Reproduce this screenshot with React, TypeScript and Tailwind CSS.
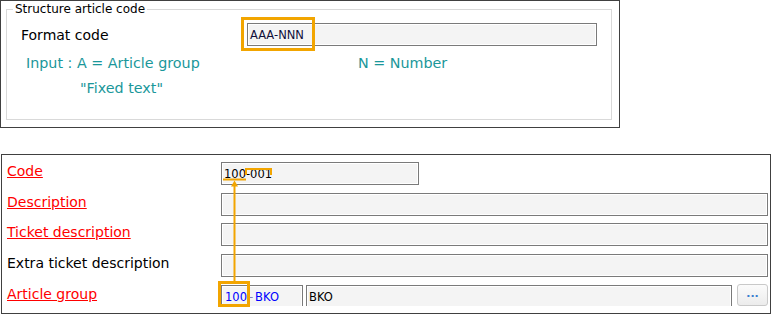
export default function App() {
  const inputCls =
    "h-[23px] border border-[#7a7a7a] bg-[#f4f4f4] shadow-[inset_0_0_0_1px_#ffffff] flex items-center text-[11.5px] leading-[14px]";
  const labelCls = "w-[214px] shrink-0 text-[14px] leading-[18px]";
  return (
    <div className="relative w-[771px] h-[314px] bg-white overflow-hidden font-['DejaVu_Sans',Verdana,sans-serif] text-black">
      {/* Top panel */}
      <div className="w-[620px] h-[128px] border border-[#404040] px-[5px] pt-[1px]">
        <fieldset className="w-[606px] h-[118px] border border-[#d9d9d9] m-0 p-0">
          <legend className="ml-[6px] px-[2px] text-[12px] leading-[14px] text-black">
            Structure article code
          </legend>
          <div className="mt-[7px] flex items-center">
            <div className="w-[240px] shrink-0 pl-[14px] pt-[2px] text-[14px] leading-[17px]">Format code</div>
            <div className={inputCls + " w-[350px] pl-[2px] text-[#10103a]"}>AAA-NNN</div>
          </div>
          <div className="mt-[9px] flex text-[14.3px] leading-[17px] text-[#1a979a]">
            <span className="w-[351px] shrink-0 pl-[19px]">Input : A = Article group</span>
            <span>N = Number</span>
          </div>
          <div className="mt-[8px] pl-[73px] text-[14.3px] leading-[17px] text-[#1a979a]">"Fixed text"</div>
        </fieldset>
      </div>

      {/* Bottom panel */}
      <div className="mt-[26px] ml-[1px] w-[770px] h-[160px] border border-[#404040] overflow-hidden pl-[5px] pt-[7px]">
        <div className="flex items-start">
          <span className={labelCls + " text-[#ff0000] underline"}>Code</span>
          <div className={inputCls + " w-[198px] pl-[2px] text-black"}>100-001</div>
        </div>
        <div className="mt-[8px] flex items-start">
          <span className={labelCls + " text-[#ff0000] underline"}>Description</span>
          <div className={inputCls + " w-[547px]"}></div>
        </div>
        <div className="mt-[7px] flex items-start">
          <span className={labelCls + " text-[#ff0000] underline"}>Ticket description</span>
          <div className={inputCls + " w-[547px]"}></div>
        </div>
        <div className="mt-[8px] flex items-start">
          <span className={labelCls}>Extra ticket description</span>
          <div className={inputCls + " w-[547px]"}></div>
        </div>
        <div className="mt-[8px] flex items-start">
          <span className={labelCls + " text-[#ff0000] underline"}>Article group</span>
          <div className="flex h-[21px] overflow-hidden gap-[3px] items-start">
            <div className={inputCls + " w-[82px] pl-[3px] text-[#0000ff] shrink-0"}>
              <span>100</span>
              <span className="mx-[2px] text-[#8080c0]">-</span>
              <span>BKO</span>
            </div>
            <div className={inputCls + " w-[426px] pl-[2px] shrink-0 text-black"}>BKO</div>
          </div>
          <button className="-mt-[1px] ml-[5px] w-[31px] h-[22px] rounded-[3px] border border-[#c9c9c9] bg-gradient-to-b from-[#fbfbfb] to-[#ececec] text-[11px] leading-[12px] font-bold text-[#3b7dd0] flex items-end justify-center pb-[5px]">
            ...
          </button>
        </div>
      </div>

      {/* Orange annotations */}
      <svg
        className="absolute left-0 top-0 pointer-events-none"
        width="771"
        height="314"
        viewBox="0 0 771 314"
      >
        <g fill="none" stroke="#f2a500">
          <rect x="242.5" y="18.5" width="71" height="31" strokeWidth="3" />
          <path d="M246 175 V169 H271 V175" strokeWidth="2" />
          <path d="M223 179.5 H246" strokeWidth="2" />
          <path d="M234.5 185 V281" strokeWidth="2" />
          <rect x="219.5" y="282.5" width="29" height="23" strokeWidth="3" />
        </g>
        <polygon points="234.5,180.5 231,186.5 238,186.5" fill="#f2a500" />
      </svg>
    </div>
  );
}
